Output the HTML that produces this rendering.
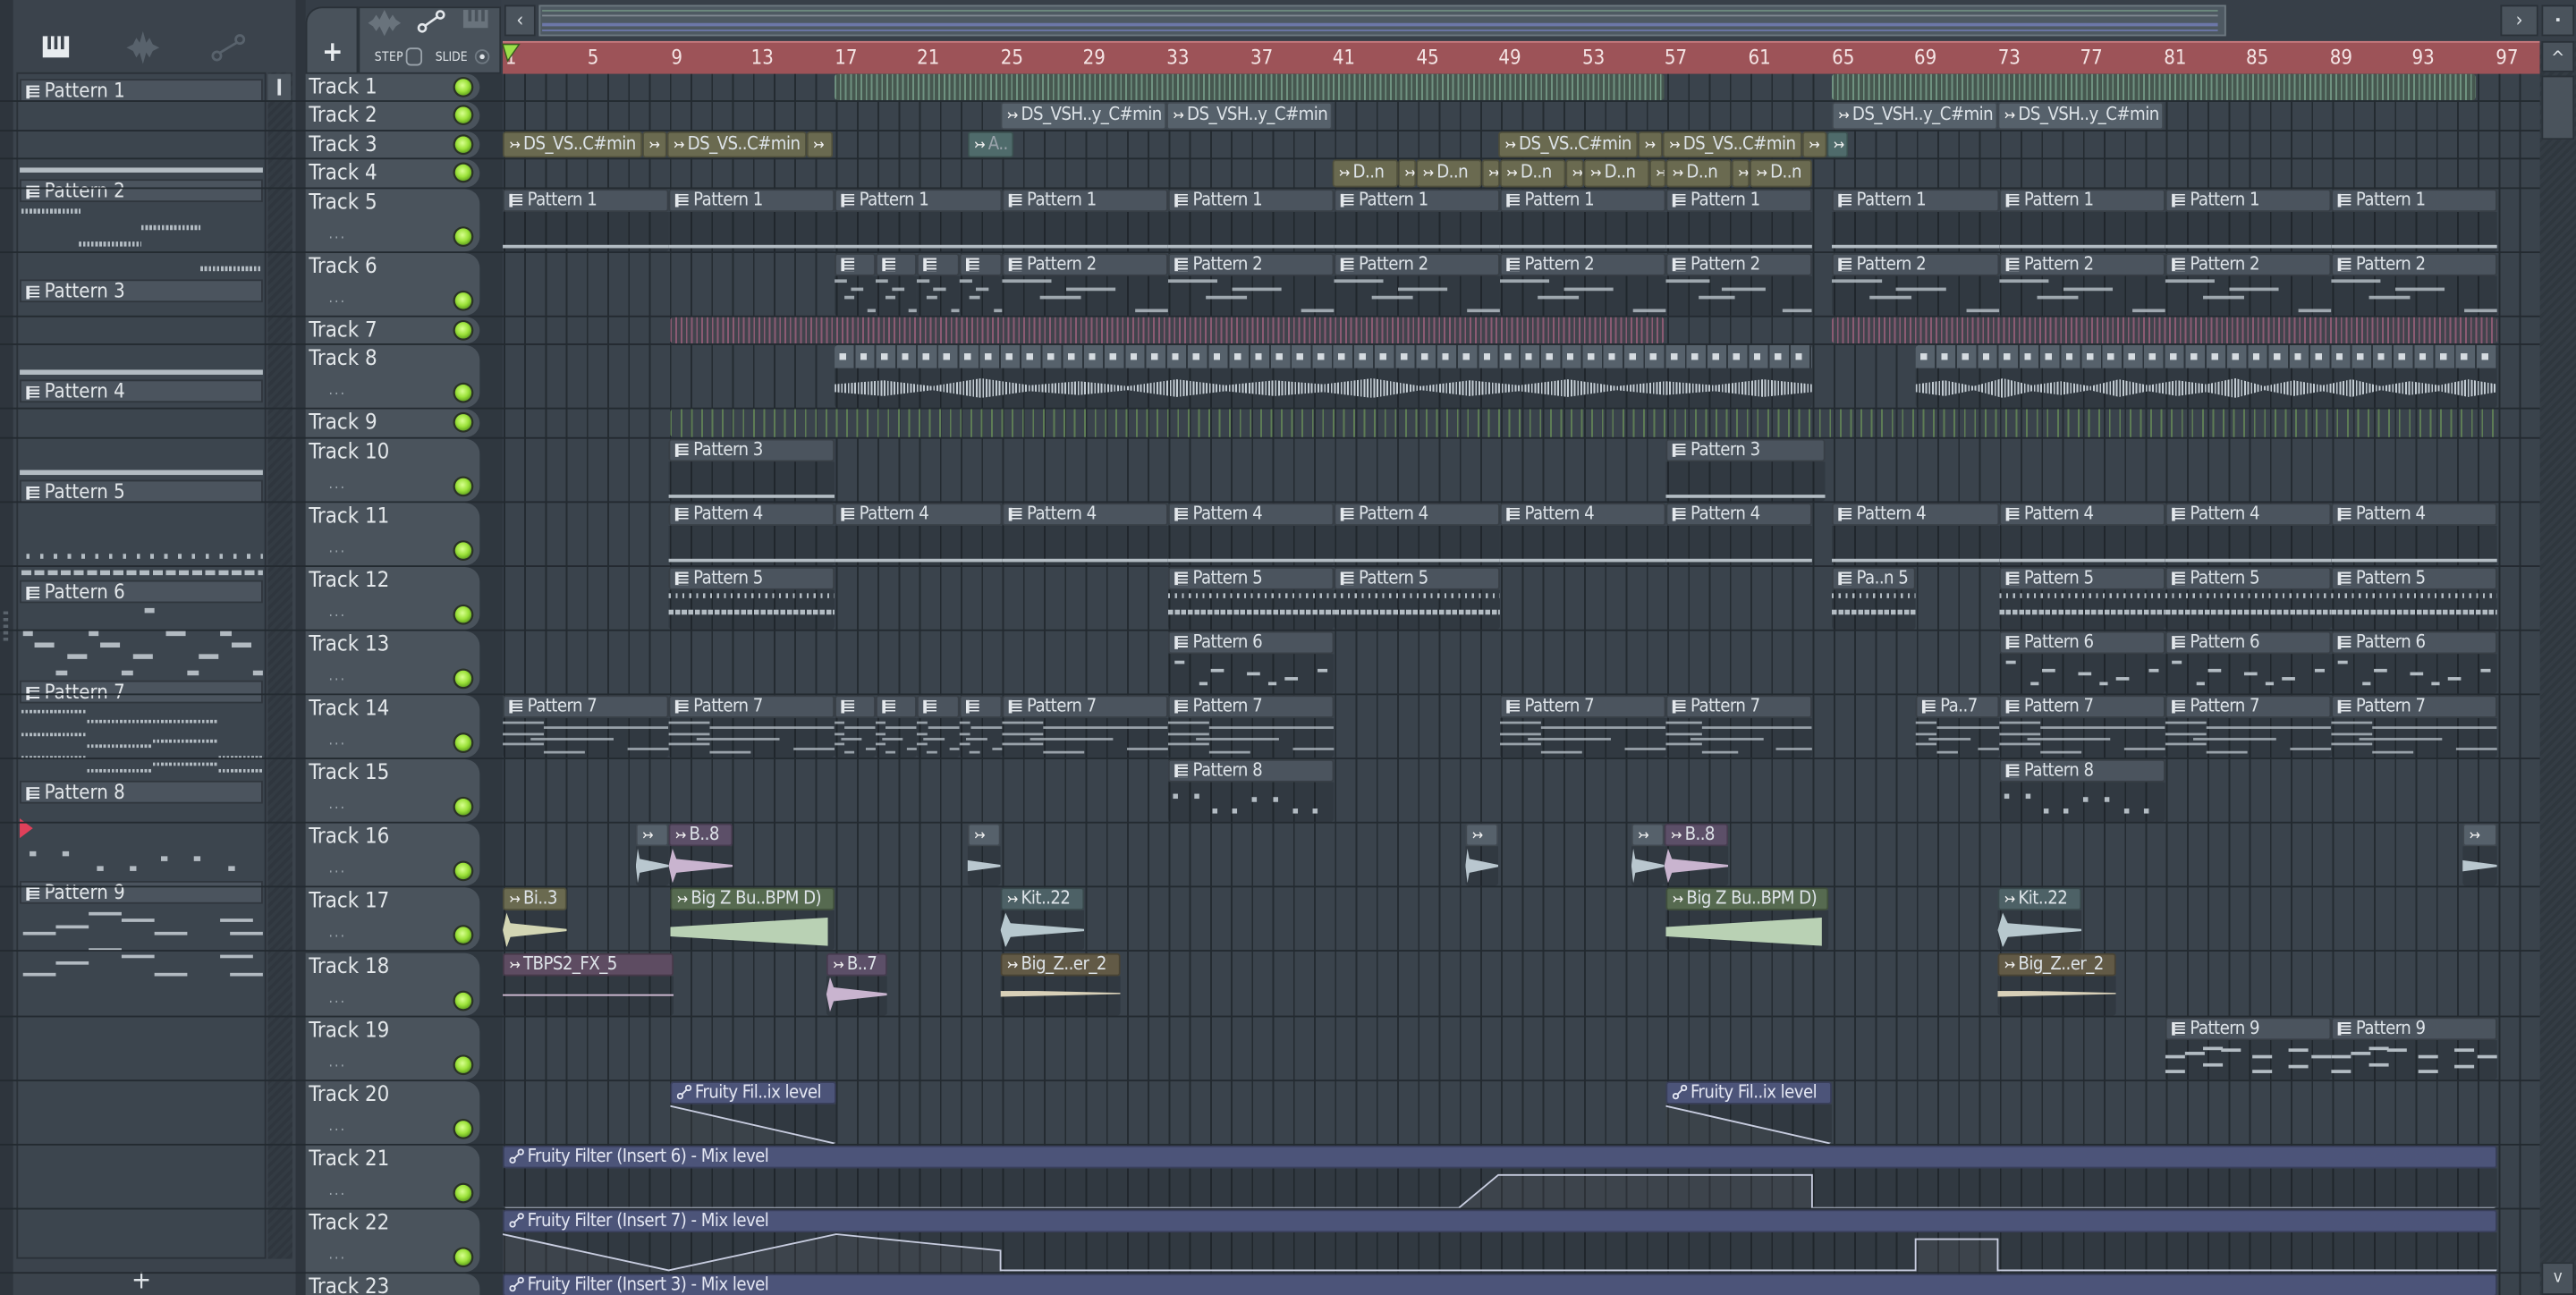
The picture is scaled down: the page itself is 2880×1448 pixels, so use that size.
<!DOCTYPE html>
<html><head><meta charset="utf-8">
<style>
html,body{margin:0;padding:0;width:2880px;height:1448px;overflow:hidden;background:#2f363e}
#s{position:absolute;left:0;top:0;width:1568px;height:788px;transform:scale(1.83673,1.83756);transform-origin:0 0;background:#353d46;font-family:"Liberation Sans Narrow","DejaVu Sans Condensed","Liberation Sans",sans-serif;color:#dde3e8;overflow:hidden}
.a{position:absolute}
.grid{position:absolute;left:306px;top:45px;width:1240px;height:743px;background-color:#3a434c;background-image:repeating-linear-gradient(90deg,transparent 0 0.5px,#242b31 0.5px 1.5px,transparent 1.5px 12.65px)}
.row{position:absolute;left:0;width:1546px;border-bottom:1px solid #232a30;box-sizing:border-box}
.th{position:absolute;left:186px;width:106px;top:0;bottom:0;background:#4a535c;border-radius:0 9px 9px 0;font-size:13px;line-height:17px;padding-left:2px;box-sizing:border-box;color:#e3e7ea}
.led{position:absolute;width:10px;height:10px;border-radius:50%;background:radial-gradient(circle at 45% 40%,#d8ff90 0,#9ce23a 45%,#5a9a1a 80%);box-shadow:0 0 0 1.2px #2a3226}
.dots{position:absolute;left:14px;bottom:1px;font-size:9px;color:#9aa3ab;letter-spacing:1px}
.c{position:absolute;top:0;height:100%;box-sizing:border-box;overflow:hidden;border-radius:2px}
.h{height:14px;background:#4b545e;font-size:11px;letter-spacing:-0.3px;line-height:12px;padding-left:3px;white-space:nowrap;border:1px solid rgba(0,0,0,.25);box-sizing:border-box;overflow:hidden;border-radius:2px}
.s .h{height:100%;line-height:14px}
.b{position:absolute;left:0;right:0;top:14px;bottom:0;background:rgba(18,22,27,.22)}
.pi{display:inline-block;width:6px;height:8px;margin-right:3px;vertical-align:-1px;background:repeating-linear-gradient(#e4e8ec 0 1px,#4b545e 1px 2px);border-left:2px solid #e4e8ec}
.ai{display:inline-block;margin-right:2px;font-size:9px;font-style:normal;color:#f2f2f2}
.ln{position:absolute;left:0;right:0;bottom:2px;height:2px;background:#b3bcc3}
.au .h{background:#56616b}
.ol .h{background:#6a6a50}
.te .h{background:#4f6b6b}
.pu .h{background:#5c4f68}
.gr .h{background:#566a50}
.br .h{background:#625a46}
.tl .h{background:#4d6166}
.am .h{background:#4c5479;color:#e3e6f2}
.hd{color:#9aa3ab}
.wv{position:absolute;left:0;right:0;top:6px;height:12px;background:repeating-linear-gradient(90deg,#c3ccd3 0 1px,transparent 1px 2px);clip-path:polygon(0 30%,5% 10%,10% 40%,15% 0,20% 35%,25% 15%,30% 40%,35% 5%,40% 35%,45% 10%,50% 30%,55% 0,60% 40%,65% 10%,70% 35%,75% 5%,80% 40%,85% 15%,90% 35%,95% 5%,100% 30%,100% 70%,95% 95%,90% 65%,85% 85%,80% 60%,75% 95%,70% 65%,65% 90%,60% 60%,55% 100%,50% 70%,45% 90%,40% 65%,35% 95%,30% 60%,25% 85%,20% 65%,15% 100%,10% 60%,5% 90%,0 70%)}
.tr{position:absolute;left:0;right:0;top:1px;bottom:2px;clip-path:polygon(0 50%,6% 0,12% 30%,100% 47%,100% 53%,12% 70%,6% 100%)}
.rn{position:absolute;top:28px;font-size:12px;color:#f4e4e4;width:24px;text-align:center;margin-left:-10px}
.pp{position:absolute;left:12px;width:148px;height:14px;background:#4b545e;border:1px solid #2f363d;box-sizing:border-box;font-size:12px;line-height:12px;padding-left:3px;color:#e3e7ea}
.nt{position:absolute;height:2.5px;background:#b2bac1}
svg{display:block}
.p2::before{content:"";position:absolute;left:0;right:0;top:2px;height:20px;background:
linear-gradient(#b3bcc3,#b3bcc3) 0 0/30% 2px no-repeat,
linear-gradient(#b3bcc3,#b3bcc3) 55% 30%/30% 2px no-repeat,
linear-gradient(#b3bcc3,#b3bcc3) 30% 60%/25% 2px no-repeat,
linear-gradient(#b3bcc3,#b3bcc3) 100% 100%/20% 2px no-repeat;opacity:.85}
.p5::before{content:"";position:absolute;left:0;right:0;top:2px;height:3px;background:repeating-linear-gradient(90deg,#b3bcc3 0 1.2px,transparent 1.2px 4.2px)}
.p5::after{content:"";position:absolute;left:0;right:0;top:12px;height:3px;background:repeating-linear-gradient(90deg,#b3bcc3 0 3px,transparent 3px 4px)}
.p6::before{content:"";position:absolute;left:0;right:0;top:3px;height:16px;background:
linear-gradient(#b3bcc3,#b3bcc3) 4% 10%/6% 2px no-repeat,linear-gradient(#b3bcc3,#b3bcc3) 28% 40%/8% 2px no-repeat,linear-gradient(#b3bcc3,#b3bcc3) 52% 60%/8% 2px no-repeat,linear-gradient(#b3bcc3,#b3bcc3) 76% 80%/8% 2px no-repeat,linear-gradient(#b3bcc3,#b3bcc3) 96% 40%/6% 2px no-repeat,linear-gradient(#b3bcc3,#b3bcc3) 20% 100%/5% 2px no-repeat,linear-gradient(#b3bcc3,#b3bcc3) 64% 100%/5% 2px no-repeat}
.p7::before{content:"";position:absolute;left:0;right:0;top:2px;height:20px;background:
linear-gradient(#b3bcc3,#b3bcc3) 0 0/25% 1.5px no-repeat,
linear-gradient(#b3bcc3,#b3bcc3) 100% 15%/75% 1.5px no-repeat,
linear-gradient(#b3bcc3,#b3bcc3) 0 35%/25% 1.5px no-repeat,
linear-gradient(#b3bcc3,#b3bcc3) 33% 55%/50% 1.5px no-repeat,
linear-gradient(#b3bcc3,#b3bcc3) 0 70%/25% 1.5px no-repeat,
linear-gradient(#b3bcc3,#b3bcc3) 100% 85%/25% 1.5px no-repeat,
linear-gradient(#b3bcc3,#b3bcc3) 33% 95%/25% 1.5px no-repeat;opacity:.8}
.p8::before{content:"";position:absolute;left:0;right:0;top:4px;height:16px;background:
linear-gradient(#b3bcc3,#b3bcc3) 3% 20%/3% 3px no-repeat,linear-gradient(#b3bcc3,#b3bcc3) 16% 20%/3% 3px no-repeat,linear-gradient(#b3bcc3,#b3bcc3) 52% 40%/3% 3px no-repeat,linear-gradient(#b3bcc3,#b3bcc3) 65% 40%/3% 3px no-repeat,linear-gradient(#b3bcc3,#b3bcc3) 28% 90%/3% 3px no-repeat,linear-gradient(#b3bcc3,#b3bcc3) 40% 90%/3% 3px no-repeat,linear-gradient(#b3bcc3,#b3bcc3) 78% 90%/3% 3px no-repeat,linear-gradient(#b3bcc3,#b3bcc3) 90% 90%/3% 3px no-repeat}
.p9::before{content:"";position:absolute;left:0;right:0;top:3px;height:18px;background:
linear-gradient(#b3bcc3,#b3bcc3) 0 40%/12% 2px no-repeat,linear-gradient(#b3bcc3,#b3bcc3) 13% 25%/12% 2px no-repeat,linear-gradient(#b3bcc3,#b3bcc3) 26% 10%/12% 2px no-repeat,linear-gradient(#b3bcc3,#b3bcc3) 38% 15%/12% 2px no-repeat,linear-gradient(#b3bcc3,#b3bcc3) 60% 40%/12% 2px no-repeat,linear-gradient(#b3bcc3,#b3bcc3) 84% 15%/12% 2px no-repeat,linear-gradient(#b3bcc3,#b3bcc3) 100% 40%/12% 2px no-repeat,linear-gradient(#b3bcc3,#b3bcc3) 0 95%/12% 2px no-repeat,linear-gradient(#b3bcc3,#b3bcc3) 26% 70%/12% 2px no-repeat,linear-gradient(#b3bcc3,#b3bcc3) 60% 95%/12% 2px no-repeat,linear-gradient(#b3bcc3,#b3bcc3) 84% 75%/12% 2px no-repeat}
.t8h{height:14px;background:repeating-linear-gradient(90deg,#56616b 0 11.6px,#2d353c 11.6px 12.65px)}
.t8a{position:absolute;left:0;right:0;top:5px;height:4px;background:repeating-linear-gradient(90deg,transparent 0 3px,#d6dce1 3px 7px,transparent 7px 12.65px)}
</style></head><body><div id="s">

<!-- left picker -->
<div class="a" style="left:0;top:0;width:8px;height:788px;background:#2e353d"></div>
<div class="a" style="left:8px;top:0;width:172px;height:788px;background:#3b434c"></div>
<div class="a" style="left:26px;top:22px;width:16px;height:13px;background:#e8ecef"></div>
<div class="a" style="left:29px;top:22px;width:2px;height:8px;background:#3b434c"></div><div class="a" style="left:33px;top:22px;width:2px;height:8px;background:#3b434c"></div><div class="a" style="left:37px;top:22px;width:2px;height:8px;background:#3b434c"></div>
<svg class="a" style="left:76px;top:18px" width="22" height="22"><path d="M1 11 L5 9 L7 5 L9 8 L11 1 L13 8 L15 5 L17 9 L21 11 L17 13 L15 17 L13 14 L11 21 L9 14 L7 17 L5 13Z" fill="#58626c"/></svg>
<svg class="a" style="left:128px;top:20px" width="22" height="18"><circle cx="4" cy="14" r="2.5" fill="none" stroke="#58626c" stroke-width="1.5"/><circle cx="18" cy="4" r="2.5" fill="none" stroke="#58626c" stroke-width="1.5"/><path d="M6 12 L16 6" stroke="#58626c" stroke-width="1.5"/></svg>
<div class="a" style="left:10px;top:44px;width:152px;height:722px;background:#3c454e;border:1px solid #2a3138;box-sizing:border-box"></div>
<div class="a" style="left:163px;top:44px;width:15px;height:722px;background:repeating-linear-gradient(135deg,#333b43 0 2px,#2f363e 2px 4px)"></div>
<div class="a" style="left:163px;top:45px;width:14px;height:16px;background:#4a535c"></div><div class="a" style="left:169px;top:48px;width:2px;height:10px;background:#dfe4e8"></div>
<div class="a" style="left:80px;top:769px;font-size:16px;color:#dfe4e8">+</div>
<div class="a" style="left:2px;top:372px;width:3px;height:20px;background:repeating-linear-gradient(#5a636c 0 2px,transparent 2px 4px)"></div>

<div class="pp" style="top:48px"><i class="pi"></i>Pattern 1</div>
<div class="a" style="left:12px;top:102px;width:148px;height:3px;background:#b3bcc3"></div>
<div class="pp" style="top:109px"><i class="pi"></i>Pattern 2</div>
<div class="a" style="left:13px;top:127px;width:36px;height:3px;background:repeating-linear-gradient(90deg,#b3bcc3 0 1.5px,transparent 1.5px 2.5px)"></div>
<div class="a" style="left:86px;top:137px;width:36px;height:3px;background:repeating-linear-gradient(90deg,#b3bcc3 0 1.5px,transparent 1.5px 2.5px)"></div>
<div class="a" style="left:48px;top:147px;width:38px;height:3px;background:repeating-linear-gradient(90deg,#b3bcc3 0 1.5px,transparent 1.5px 2.5px)"></div>
<div class="a" style="left:122px;top:162px;width:37px;height:3px;background:repeating-linear-gradient(90deg,#b3bcc3 0 1.5px,transparent 1.5px 2.5px)"></div>
<div class="pp" style="top:170px"><i class="pi"></i>Pattern 3</div>
<div class="a" style="left:12px;top:225px;width:148px;height:3px;background:#b3bcc3"></div>
<div class="pp" style="top:231px"><i class="pi"></i>Pattern 4</div>
<div class="a" style="left:12px;top:286px;width:148px;height:3px;background:#b3bcc3"></div>
<div class="pp" style="top:292px"><i class="pi"></i>Pattern 5</div>
<div class="a" style="left:16px;top:337px;width:144px;height:3px;background:repeating-linear-gradient(90deg,#b3bcc3 0 2px,transparent 2px 8.4px)"></div>
<div class="a" style="left:13px;top:347px;width:147px;height:3px;background:repeating-linear-gradient(90deg,#b3bcc3 0 6px,transparent 6px 8px)"></div>
<div class="pp" style="top:353px"><i class="pi"></i>Pattern 6</div>
<div class="nt" style="left:88px;top:370px;width:6px"></div>
<div class="nt" style="left:14px;top:384px;width:6px"></div><div class="nt" style="left:54px;top:384px;width:6px"></div><div class="nt" style="left:101px;top:384px;width:12px"></div><div class="nt" style="left:134px;top:384px;width:7px"></div>
<div class="nt" style="left:21px;top:391px;width:12px"></div><div class="nt" style="left:61px;top:391px;width:12px"></div><div class="nt" style="left:141px;top:391px;width:12px"></div>
<div class="nt" style="left:41px;top:398px;width:12px"></div><div class="nt" style="left:81px;top:398px;width:12px"></div><div class="nt" style="left:121px;top:398px;width:12px"></div>
<div class="nt" style="left:34px;top:408px;width:7px"></div><div class="nt" style="left:74px;top:408px;width:7px"></div><div class="nt" style="left:114px;top:408px;width:7px"></div><div class="nt" style="left:154px;top:408px;width:6px"></div>
<div class="pp" style="top:414px"><i class="pi"></i>Pattern 7</div>
<div class="a" style="left:13px;top:432px;width:40px;height:1.5px;background:repeating-linear-gradient(90deg,#b3bcc3 0 1.5px,transparent 1.5px 2.5px)"></div>
<div class="a" style="left:53px;top:438px;width:80px;height:1.5px;background:repeating-linear-gradient(90deg,#b3bcc3 0 1.5px,transparent 1.5px 2.5px)"></div>
<div class="a" style="left:13px;top:446px;width:40px;height:1.5px;background:repeating-linear-gradient(90deg,#b3bcc3 0 1.5px,transparent 1.5px 2.5px)"></div>
<div class="a" style="left:93px;top:450px;width:40px;height:1.5px;background:repeating-linear-gradient(90deg,#b3bcc3 0 1.5px,transparent 1.5px 2.5px)"></div>
<div class="a" style="left:53px;top:453px;width:40px;height:1.5px;background:repeating-linear-gradient(90deg,#b3bcc3 0 1.5px,transparent 1.5px 2.5px)"></div>
<div class="a" style="left:13px;top:460px;width:40px;height:1.5px;background:repeating-linear-gradient(90deg,#b3bcc3 0 1.5px,transparent 1.5px 2.5px)"></div>
<div class="a" style="left:133px;top:460px;width:27px;height:1.5px;background:repeating-linear-gradient(90deg,#b3bcc3 0 1.5px,transparent 1.5px 2.5px)"></div>
<div class="a" style="left:93px;top:464px;width:40px;height:1.5px;background:repeating-linear-gradient(90deg,#b3bcc3 0 1.5px,transparent 1.5px 2.5px)"></div>
<div class="a" style="left:53px;top:468px;width:40px;height:1.5px;background:repeating-linear-gradient(90deg,#b3bcc3 0 1.5px,transparent 1.5px 2.5px)"></div>
<div class="a" style="left:133px;top:468px;width:27px;height:1.5px;background:repeating-linear-gradient(90deg,#b3bcc3 0 1.5px,transparent 1.5px 2.5px)"></div>
<div class="pp" style="top:475px"><i class="pi"></i>Pattern 8</div>
<div class="a" style="left:12px;top:498px;width:0;height:0;border-left:8px solid #e0405a;border-top:6px solid transparent;border-bottom:6px solid transparent"></div>
<div class="nt" style="left:18px;top:518px;width:4px;height:3px"></div><div class="nt" style="left:38px;top:518px;width:4px;height:3px"></div><div class="nt" style="left:98px;top:521px;width:4px;height:3px"></div><div class="nt" style="left:118px;top:521px;width:4px;height:3px"></div>
<div class="nt" style="left:59px;top:527px;width:4px;height:3px"></div><div class="nt" style="left:79px;top:527px;width:4px;height:3px"></div><div class="nt" style="left:139px;top:527px;width:4px;height:3px"></div>
<div class="pp" style="top:536px"><i class="pi"></i>Pattern 9</div>
<div class="nt" style="left:54px;top:555px;width:20px;height:2px"></div><div class="nt" style="left:74px;top:559px;width:20px;height:2px"></div><div class="nt" style="left:134px;top:559px;width:20px;height:2px"></div><div class="nt" style="left:34px;top:563px;width:20px;height:2px"></div>
<div class="nt" style="left:14px;top:567px;width:20px;height:2px"></div><div class="nt" style="left:94px;top:567px;width:20px;height:2px"></div><div class="nt" style="left:140px;top:567px;width:20px;height:2px"></div>
<div class="nt" style="left:54px;top:577px;width:20px;height:2px"></div><div class="nt" style="left:74px;top:581px;width:20px;height:2px"></div><div class="nt" style="left:134px;top:581px;width:20px;height:2px"></div><div class="nt" style="left:34px;top:585px;width:20px;height:2px"></div>
<div class="nt" style="left:14px;top:592px;width:20px;height:2px"></div><div class="nt" style="left:94px;top:592px;width:20px;height:2px"></div><div class="nt" style="left:140px;top:592px;width:20px;height:2px"></div>

<!-- toolbar -->
<div class="a" style="left:180px;top:0;width:6px;height:788px;background:#2e353d"></div>
<div class="a" style="left:186px;top:4px;width:32px;height:41px;background:#49525b;border-radius:10px 0 0 0;border:1px solid #2a3138;box-sizing:border-box"></div>
<div class="a" style="left:196px;top:22px;font-size:17px;color:#e8ecef;font-weight:bold">+</div>
<div class="a" style="left:218px;top:4px;width:87px;height:41px;background:#49525b;border:1px solid #2a3138;box-sizing:border-box"></div>
<svg class="a" style="left:223px;top:6px" width="22" height="16"><path d="M1 8 L4 6 L6 3 L8 6 L11 0 L14 6 L16 3 L18 6 L21 8 L18 10 L16 13 L14 10 L11 16 L8 10 L6 13 L4 10Z" fill="#69737c"/></svg>
<svg class="a" style="left:253px;top:5px" width="20" height="16"><circle cx="4" cy="12" r="2.2" fill="none" stroke="#e4e8ec" stroke-width="1.4"/><circle cx="15" cy="4" r="2.2" fill="none" stroke="#e4e8ec" stroke-width="1.4"/><path d="M6 10.5 L13 5.5" stroke="#e4e8ec" stroke-width="1.4"/></svg>
<div class="a" style="left:282px;top:6px;width:15px;height:11px;background:#69737c"></div>
<div class="a" style="left:285px;top:6px;width:1.5px;height:7px;background:#49525b"></div><div class="a" style="left:289px;top:6px;width:1.5px;height:7px;background:#49525b"></div><div class="a" style="left:293px;top:6px;width:1.5px;height:7px;background:#49525b"></div>
<div class="a" style="left:228px;top:30px;font-size:7.5px;color:#dfe4e8;letter-spacing:.2px">STEP</div>
<div class="a" style="left:247px;top:29px;width:10px;height:11px;border:1.3px solid #9aa3ab;border-radius:3px;box-sizing:border-box"></div>
<div class="a" style="left:265px;top:30px;font-size:7.5px;color:#dfe4e8">SLIDE</div>
<div class="a" style="left:289px;top:30px;width:9px;height:9px;border:1.3px solid #707a83;border-radius:50%;box-sizing:border-box"></div><div class="a" style="left:292px;top:33px;width:3px;height:3px;border-radius:50%;background:#dfe4e8"></div>

<!-- top overview -->
<div class="a" style="left:305px;top:0;width:1263px;height:25px;background:#373f48"></div>
<div class="a" style="left:307px;top:3px;width:19px;height:19px;background:#4a535c;border:1px solid #2a3138;box-sizing:border-box;font-size:12px;line-height:17px;text-align:center;color:#dfe4e8">&lsaquo;</div>
<div class="a" style="left:328px;top:3px;width:1027px;height:19px;background:#4e5962;border:1px solid #6d7880;box-sizing:border-box"></div>
<div class="a" style="left:330px;top:6px;width:1020px;height:1px;background:#6d8a7f"></div>
<div class="a" style="left:330px;top:9px;width:1020px;height:1px;background:#7f8790"></div>
<div class="a" style="left:330px;top:14px;width:1020px;height:2px;background:#6c77a8"></div>
<div class="a" style="left:330px;top:18px;width:1020px;height:1px;background:#6c77a8"></div>
<div class="a" style="left:1522px;top:3px;width:23px;height:19px;background:#4a535c;border:1px solid #2a3138;box-sizing:border-box;font-size:12px;line-height:17px;text-align:center;color:#dfe4e8">&rsaquo;</div>
<div class="a" style="left:1547px;top:3px;width:20px;height:19px;background:#4a535c;border:1px solid #2a3138;box-sizing:border-box"></div><div class="a" style="left:1556px;top:11px;width:2px;height:2px;background:#dfe4e8"></div>

<!-- ruler -->
<div class="a" style="left:306px;top:25px;width:1240px;height:20px;background:#9d5358;border-top:1px solid #c77a7e;box-sizing:border-box"></div>
<div class="rn" style="left:309px">1</div><div class="rn" style="left:359px">5</div><div class="rn" style="left:410px">9</div><div class="rn" style="left:462px">13</div><div class="rn" style="left:513px">17</div><div class="rn" style="left:563px">21</div><div class="rn" style="left:614px">25</div><div class="rn" style="left:664px">29</div><div class="rn" style="left:715px">33</div><div class="rn" style="left:766px">37</div><div class="rn" style="left:816px">41</div><div class="rn" style="left:867px">45</div><div class="rn" style="left:917px">49</div><div class="rn" style="left:968px">53</div><div class="rn" style="left:1018px">57</div><div class="rn" style="left:1069px">61</div><div class="rn" style="left:1120px">65</div><div class="rn" style="left:1170px">69</div><div class="rn" style="left:1221px">73</div><div class="rn" style="left:1271px">77</div><div class="rn" style="left:1322px">81</div><div class="rn" style="left:1372px">85</div><div class="rn" style="left:1423px">89</div><div class="rn" style="left:1473px">93</div><div class="rn" style="left:1524px">97</div>
<svg class="a" style="left:305px;top:26px" width="12" height="12"><path d="M1 1 L11 1 L4 11 Z" fill="#9be04a" stroke="#3a5a20" stroke-width=".8"/></svg>

<!-- right scrollbar -->
<div class="a" style="left:1546px;top:25px;width:22px;height:763px;background:repeating-linear-gradient(135deg,#343c44 0 2px,#2f373e 2px 4px)"></div>
<div class="a" style="left:1547px;top:25px;width:20px;height:19px;background:#4a535c;border:1px solid #2a3138;box-sizing:border-box;font-size:11px;line-height:19px;text-align:center;color:#dfe4e8">^</div>
<div class="a" style="left:1547px;top:46px;width:20px;height:39px;background:#4a535c;border:1px solid #2a3138;box-sizing:border-box"></div>
<div class="a" style="left:1547px;top:768px;width:20px;height:20px;background:#4a535c;border:1px solid #2a3138;box-sizing:border-box;font-size:10px;line-height:18px;text-align:center;color:#dfe4e8">v</div>

<div class="a" style="left:186px;top:45px;width:120px;height:743px;background:#2f373f"></div>
<div class="grid"></div>

<!-- Tracks -->
<div class="row" style="top:45px;height:17.4px"><div class="th">Track 1<div class="led" style="left:91px;top:3px"></div></div>
 <div class="c" style="left:508px;width:505px;background:#46574f repeating-linear-gradient(90deg,#6f9280 0 1px,transparent 1px 3.16px)"></div>
 <div class="c" style="left:1115px;width:392px;background:#46574f repeating-linear-gradient(90deg,#6f9280 0 1px,transparent 1px 3.16px)"></div>
</div>
<div class="row" style="top:62.4px;height:17.4px"><div class="th">Track 2<div class="led" style="left:91px;top:3px"></div></div>
 <div class="c s au" style="left:609px;width:101px"><div class="h"><i class="ai">↣</i>DS_VSH..y_C#min</div></div>
 <div class="c s au" style="left:710px;width:101px"><div class="h"><i class="ai">↣</i>DS_VSH..y_C#min</div></div>
 <div class="c s au" style="left:1115px;width:101px"><div class="h"><i class="ai">↣</i>DS_VSH..y_C#min</div></div>
 <div class="c s au" style="left:1216px;width:101px"><div class="h"><i class="ai">↣</i>DS_VSH..y_C#min</div></div>
</div>
<div class="row" style="top:79.8px;height:17.4px"><div class="th">Track 3<div class="led" style="left:91px;top:3px"></div></div>
 <div class="c s ol" style="left:306px;width:85px"><div class="h"><i class="ai">↣</i>DS_VS..C#min</div></div>
 <div class="c s ol" style="left:391px;width:15px"><div class="h"><i class="ai">↣</i></div></div>
 <div class="c s ol" style="left:406px;width:85px"><div class="h"><i class="ai">↣</i>DS_VS..C#min</div></div>
 <div class="c s ol" style="left:491px;width:16px"><div class="h"><i class="ai">↣</i></div></div>
 <div class="c s te" style="left:589px;width:28px"><div class="h"><i class="ai">↣</i><span class="hd">A..</span></div></div>
 <div class="c s ol" style="left:912px;width:85px"><div class="h"><i class="ai">↣</i>DS_VS..C#min</div></div>
 <div class="c s ol" style="left:997px;width:15px"><div class="h"><i class="ai">↣</i></div></div>
 <div class="c s ol" style="left:1012px;width:85px"><div class="h"><i class="ai">↣</i>DS_VS..C#min</div></div>
 <div class="c s ol" style="left:1097px;width:15px"><div class="h"><i class="ai">↣</i></div></div>
 <div class="c s te" style="left:1112px;width:13px"><div class="h"><i class="ai">↣</i></div></div>
</div>
<div class="row" style="top:97.2px;height:17.4px"><div class="th">Track 4<div class="led" style="left:91px;top:3px"></div></div>
 <div class="c s ol" style="left:811px;width:40px"><div class="h"><i class="ai">↣</i>D..n</div></div><div class="c s ol" style="left:851px;width:11px"><div class="h"><i class="ai">↣</i></div></div>
 <div class="c s ol" style="left:862px;width:40px"><div class="h"><i class="ai">↣</i>D..n</div></div><div class="c s ol" style="left:902px;width:11px"><div class="h"><i class="ai">↣</i></div></div>
 <div class="c s ol" style="left:913px;width:40px"><div class="h"><i class="ai">↣</i>D..n</div></div><div class="c s ol" style="left:953px;width:11px"><div class="h"><i class="ai">↣</i></div></div>
 <div class="c s ol" style="left:964px;width:40px"><div class="h"><i class="ai">↣</i>D..n</div></div><div class="c s ol" style="left:1004px;width:10px"><div class="h"><i class="ai">↣</i></div></div>
 <div class="c s ol" style="left:1014px;width:40px"><div class="h"><i class="ai">↣</i>D..n</div></div><div class="c s ol" style="left:1054px;width:11px"><div class="h"><i class="ai">↣</i></div></div>
 <div class="c s ol" style="left:1065px;width:38px"><div class="h"><i class="ai">↣</i>D..n</div></div>
</div>

<div class="row" style="top:114.6px;height:39.1px"><div class="th">Track 5<div class="led" style="left:91px;top:24px"></div><div class="dots">...</div></div>
 <div class="c" style="left:306px;width:101px"><div class="h"><i class="pi"></i>Pattern 1</div><div class="b"><div class="ln"></div></div></div>
 <div class="c" style="left:407px;width:101px"><div class="h"><i class="pi"></i>Pattern 1</div><div class="b"><div class="ln"></div></div></div>
 <div class="c" style="left:508px;width:102px"><div class="h"><i class="pi"></i>Pattern 1</div><div class="b"><div class="ln"></div></div></div>
 <div class="c" style="left:610px;width:101px"><div class="h"><i class="pi"></i>Pattern 1</div><div class="b"><div class="ln"></div></div></div>
 <div class="c" style="left:711px;width:101px"><div class="h"><i class="pi"></i>Pattern 1</div><div class="b"><div class="ln"></div></div></div>
 <div class="c" style="left:812px;width:101px"><div class="h"><i class="pi"></i>Pattern 1</div><div class="b"><div class="ln"></div></div></div>
 <div class="c" style="left:913px;width:101px"><div class="h"><i class="pi"></i>Pattern 1</div><div class="b"><div class="ln"></div></div></div>
 <div class="c" style="left:1014px;width:89px"><div class="h"><i class="pi"></i>Pattern 1</div><div class="b"><div class="ln"></div></div></div>
 <div class="c" style="left:1115px;width:102px"><div class="h"><i class="pi"></i>Pattern 1</div><div class="b"><div class="ln"></div></div></div>
 <div class="c" style="left:1217px;width:101px"><div class="h"><i class="pi"></i>Pattern 1</div><div class="b"><div class="ln"></div></div></div>
 <div class="c" style="left:1318px;width:101px"><div class="h"><i class="pi"></i>Pattern 1</div><div class="b"><div class="ln"></div></div></div>
 <div class="c" style="left:1419px;width:101px"><div class="h"><i class="pi"></i>Pattern 1</div><div class="b"><div class="ln"></div></div></div>
</div>

<div class="row" style="top:153.7px;height:39.1px"><div class="th">Track 6<div class="led" style="left:91px;top:24px"></div><div class="dots">...</div></div>
 <div class="c" style="left:508px;width:25px"><div class="h"><i class="pi"></i></div><div class="b p2"></div></div>
 <div class="c" style="left:533px;width:25px"><div class="h"><i class="pi"></i></div><div class="b p2"></div></div>
 <div class="c" style="left:558px;width:26px"><div class="h"><i class="pi"></i></div><div class="b p2"></div></div>
 <div class="c" style="left:584px;width:26px"><div class="h"><i class="pi"></i></div><div class="b p2"></div></div>
 <div class="c" style="left:610px;width:101px"><div class="h"><i class="pi"></i>Pattern 2</div><div class="b p2"></div></div>
 <div class="c" style="left:711px;width:101px"><div class="h"><i class="pi"></i>Pattern 2</div><div class="b p2"></div></div>
 <div class="c" style="left:812px;width:101px"><div class="h"><i class="pi"></i>Pattern 2</div><div class="b p2"></div></div>
 <div class="c" style="left:913px;width:101px"><div class="h"><i class="pi"></i>Pattern 2</div><div class="b p2"></div></div>
 <div class="c" style="left:1014px;width:89px"><div class="h"><i class="pi"></i>Pattern 2</div><div class="b p2"></div></div>
 <div class="c" style="left:1115px;width:102px"><div class="h"><i class="pi"></i>Pattern 2</div><div class="b p2"></div></div>
 <div class="c" style="left:1217px;width:101px"><div class="h"><i class="pi"></i>Pattern 2</div><div class="b p2"></div></div>
 <div class="c" style="left:1318px;width:101px"><div class="h"><i class="pi"></i>Pattern 2</div><div class="b p2"></div></div>
 <div class="c" style="left:1419px;width:101px"><div class="h"><i class="pi"></i>Pattern 2</div><div class="b p2"></div></div>
</div>

<div class="row" style="top:192.8px;height:17.4px"><div class="th">Track 7<div class="led" style="left:91px;top:3px"></div></div>
 <div class="c" style="left:408px;width:605px;background:#41434c repeating-linear-gradient(90deg,#8b5b73 0 1px,transparent 1px 3.16px)"></div>
 <div class="c" style="left:1115px;width:405px;background:#41434c repeating-linear-gradient(90deg,#8b5b73 0 1px,transparent 1px 3.16px)"></div>
</div>

<div class="row" style="top:210.2px;height:39.1px"><div class="th">Track 8<div class="led" style="left:91px;top:24px"></div><div class="dots">...</div></div>
 <div class="c" style="left:508px;width:595px"><div class="t8h"></div><div class="t8a"></div><div class="b"><div class="wv"></div></div></div>
 <div class="c" style="left:1166px;width:354px"><div class="t8h"></div><div class="t8a"></div><div class="b"><div class="wv"></div></div></div>
</div>

<div class="row" style="top:249.3px;height:17.4px"><div class="th">Track 9<div class="led" style="left:91px;top:3px"></div></div>
 <div class="c" style="left:408px;width:1112px;background:repeating-linear-gradient(90deg,#5d7c55 0 1px,transparent 1px 6.3px)"></div>
</div>

<div class="row" style="top:266.7px;height:39.1px"><div class="th">Track 10<div class="led" style="left:91px;top:24px"></div><div class="dots">...</div></div>
 <div class="c" style="left:407px;width:101px"><div class="h"><i class="pi"></i>Pattern 3</div><div class="b"><div class="ln"></div></div></div>
 <div class="c" style="left:1014px;width:97px"><div class="h"><i class="pi"></i>Pattern 3</div><div class="b"><div class="ln"></div></div></div>
</div>

<div class="row" style="top:305.8px;height:39.1px"><div class="th">Track 11<div class="led" style="left:91px;top:24px"></div><div class="dots">...</div></div>
 <div class="c" style="left:407px;width:101px"><div class="h"><i class="pi"></i>Pattern 4</div><div class="b"><div class="ln"></div></div></div>
 <div class="c" style="left:508px;width:102px"><div class="h"><i class="pi"></i>Pattern 4</div><div class="b"><div class="ln"></div></div></div>
 <div class="c" style="left:610px;width:101px"><div class="h"><i class="pi"></i>Pattern 4</div><div class="b"><div class="ln"></div></div></div>
 <div class="c" style="left:711px;width:101px"><div class="h"><i class="pi"></i>Pattern 4</div><div class="b"><div class="ln"></div></div></div>
 <div class="c" style="left:812px;width:101px"><div class="h"><i class="pi"></i>Pattern 4</div><div class="b"><div class="ln"></div></div></div>
 <div class="c" style="left:913px;width:101px"><div class="h"><i class="pi"></i>Pattern 4</div><div class="b"><div class="ln"></div></div></div>
 <div class="c" style="left:1014px;width:89px"><div class="h"><i class="pi"></i>Pattern 4</div><div class="b"><div class="ln"></div></div></div>
 <div class="c" style="left:1115px;width:102px"><div class="h"><i class="pi"></i>Pattern 4</div><div class="b"><div class="ln"></div></div></div>
 <div class="c" style="left:1217px;width:101px"><div class="h"><i class="pi"></i>Pattern 4</div><div class="b"><div class="ln"></div></div></div>
 <div class="c" style="left:1318px;width:101px"><div class="h"><i class="pi"></i>Pattern 4</div><div class="b"><div class="ln"></div></div></div>
 <div class="c" style="left:1419px;width:101px"><div class="h"><i class="pi"></i>Pattern 4</div><div class="b"><div class="ln"></div></div></div>
</div>

<div class="row" style="top:344.9px;height:39.1px"><div class="th">Track 12<div class="led" style="left:91px;top:24px"></div><div class="dots">...</div></div>
 <div class="c" style="left:407px;width:101px"><div class="h"><i class="pi"></i>Pattern 5</div><div class="b p5"></div></div>
 <div class="c" style="left:711px;width:101px"><div class="h"><i class="pi"></i>Pattern 5</div><div class="b p5"></div></div>
 <div class="c" style="left:812px;width:101px"><div class="h"><i class="pi"></i>Pattern 5</div><div class="b p5"></div></div>
 <div class="c" style="left:1115px;width:51px"><div class="h"><i class="pi"></i>Pa..n 5</div><div class="b p5"></div></div>
 <div class="c" style="left:1217px;width:101px"><div class="h"><i class="pi"></i>Pattern 5</div><div class="b p5"></div></div>
 <div class="c" style="left:1318px;width:101px"><div class="h"><i class="pi"></i>Pattern 5</div><div class="b p5"></div></div>
 <div class="c" style="left:1419px;width:101px"><div class="h"><i class="pi"></i>Pattern 5</div><div class="b p5"></div></div>
</div>

<div class="row" style="top:384px;height:39.1px"><div class="th">Track 13<div class="led" style="left:91px;top:24px"></div><div class="dots">...</div></div>
 <div class="c" style="left:711px;width:101px"><div class="h"><i class="pi"></i>Pattern 6</div><div class="b p6"></div></div>
 <div class="c" style="left:1217px;width:101px"><div class="h"><i class="pi"></i>Pattern 6</div><div class="b p6"></div></div>
 <div class="c" style="left:1318px;width:101px"><div class="h"><i class="pi"></i>Pattern 6</div><div class="b p6"></div></div>
 <div class="c" style="left:1419px;width:101px"><div class="h"><i class="pi"></i>Pattern 6</div><div class="b p6"></div></div>
</div>

<div class="row" style="top:423.1px;height:39.1px"><div class="th">Track 14<div class="led" style="left:91px;top:24px"></div><div class="dots">...</div></div>
 <div class="c" style="left:306px;width:101px"><div class="h"><i class="pi"></i>Pattern 7</div><div class="b p7"></div></div>
 <div class="c" style="left:407px;width:101px"><div class="h"><i class="pi"></i>Pattern 7</div><div class="b p7"></div></div>
 <div class="c" style="left:508px;width:25px"><div class="h"><i class="pi"></i></div><div class="b p7"></div></div>
 <div class="c" style="left:533px;width:25px"><div class="h"><i class="pi"></i></div><div class="b p7"></div></div>
 <div class="c" style="left:558px;width:26px"><div class="h"><i class="pi"></i></div><div class="b p7"></div></div>
 <div class="c" style="left:584px;width:26px"><div class="h"><i class="pi"></i></div><div class="b p7"></div></div>
 <div class="c" style="left:610px;width:101px"><div class="h"><i class="pi"></i>Pattern 7</div><div class="b p7"></div></div>
 <div class="c" style="left:711px;width:101px"><div class="h"><i class="pi"></i>Pattern 7</div><div class="b p7"></div></div>
 <div class="c" style="left:913px;width:101px"><div class="h"><i class="pi"></i>Pattern 7</div><div class="b p7"></div></div>
 <div class="c" style="left:1014px;width:89px"><div class="h"><i class="pi"></i>Pattern 7</div><div class="b p7"></div></div>
 <div class="c" style="left:1166px;width:51px"><div class="h"><i class="pi"></i>Pa..7</div><div class="b p7"></div></div>
 <div class="c" style="left:1217px;width:101px"><div class="h"><i class="pi"></i>Pattern 7</div><div class="b p7"></div></div>
 <div class="c" style="left:1318px;width:101px"><div class="h"><i class="pi"></i>Pattern 7</div><div class="b p7"></div></div>
 <div class="c" style="left:1419px;width:101px"><div class="h"><i class="pi"></i>Pattern 7</div><div class="b p7"></div></div>
</div>

<div class="row" style="top:462.2px;height:39.1px"><div class="th">Track 15<div class="led" style="left:91px;top:24px"></div><div class="dots">...</div></div>
 <div class="c" style="left:711px;width:101px"><div class="h"><i class="pi"></i>Pattern 8</div><div class="b p8"></div></div>
 <div class="c" style="left:1217px;width:101px"><div class="h"><i class="pi"></i>Pattern 8</div><div class="b p8"></div></div>
</div>

<div class="row" style="top:501.3px;height:39.1px"><div class="th">Track 16<div class="led" style="left:91px;top:24px"></div><div class="dots">...</div></div>
 <div class="c au" style="left:387px;width:20px"><div class="h"><i class="ai">↣</i></div><div class="b"><div class="tr" style="background:#b9c7cf"></div></div></div>
 <div class="c pu" style="left:407px;width:39px"><div class="h"><i class="ai">↣</i>B..8</div><div class="b"><div class="tr" style="background:#c9b4cf"></div></div></div>
 <div class="c au" style="left:589px;width:20px"><div class="h"><i class="ai">↣</i></div><div class="b"><div class="tr" style="background:#b9c7cf;left:-10px"></div></div></div>
 <div class="c au" style="left:892px;width:20px"><div class="h"><i class="ai">↣</i></div><div class="b"><div class="tr" style="background:#b9c7cf"></div></div></div>
 <div class="c au" style="left:993px;width:20px"><div class="h"><i class="ai">↣</i></div><div class="b"><div class="tr" style="background:#b9c7cf"></div></div></div>
 <div class="c pu" style="left:1013px;width:39px"><div class="h"><i class="ai">↣</i>B..8</div><div class="b"><div class="tr" style="background:#c9b4cf"></div></div></div>
 <div class="c au" style="left:1499px;width:21px"><div class="h"><i class="ai">↣</i></div><div class="b"><div class="tr" style="background:#b9c7cf;left:-10px"></div></div></div>
</div>

<div class="row" style="top:540.4px;height:39.1px"><div class="th">Track 17<div class="led" style="left:91px;top:24px"></div><div class="dots">...</div></div>
 <div class="c ol" style="left:306px;width:39px"><div class="h"><i class="ai">↣</i>Bi..3</div><div class="b"><div class="tr" style="background:#d3d6b4"></div></div></div>
 <div class="c gr" style="left:408px;width:100px"><div class="h"><i class="ai">↣</i>Big Z Bu..BPM D)</div><div class="b"><div class="a" style="left:0;right:4px;top:3px;bottom:2px;background:#b9d1b4;clip-path:polygon(0 35%,100% 5%,100% 95%,0 65%)"></div></div></div>
 <div class="c tl" style="left:609px;width:51px"><div class="h"><i class="ai">↣</i>Kit..22</div><div class="b"><div class="tr" style="background:#b7c8ce"></div></div></div>
 <div class="c gr" style="left:1014px;width:99px"><div class="h"><i class="ai">↣</i>Big Z Bu..BPM D)</div><div class="b"><div class="a" style="left:0;right:4px;top:3px;bottom:2px;background:#b9d1b4;clip-path:polygon(0 35%,100% 5%,100% 95%,0 65%)"></div></div></div>
 <div class="c tl" style="left:1216px;width:51px"><div class="h"><i class="ai">↣</i>Kit..22</div><div class="b"><div class="tr" style="background:#b7c8ce"></div></div></div>
</div>

<div class="row" style="top:579.5px;height:39.1px"><div class="th">Track 18<div class="led" style="left:91px;top:24px"></div><div class="dots">...</div></div>
 <div class="c pu" style="left:306px;width:104px"><div class="h" style="background:#5e4c62"><i class="ai">↣</i>TBPS2_FX_5</div><div class="b"><div class="a" style="left:0;right:0;top:11px;height:1.5px;background:#d5bfd8"></div></div></div>
 <div class="c pu" style="left:503px;width:37px"><div class="h"><i class="ai">↣</i>B..7</div><div class="b"><div class="tr" style="background:#c9b4cf"></div></div></div>
 <div class="c br" style="left:609px;width:73px"><div class="h"><i class="ai">↣</i>Big_Z..er_2</div><div class="b"><div class="a" style="left:0;right:0;top:9px;height:4px;background:#d8d0b8;clip-path:polygon(0 0,100% 40%,100% 60%,0 100%)"></div></div></div>
 <div class="c br" style="left:1216px;width:72px"><div class="h"><i class="ai">↣</i>Big_Z..er_2</div><div class="b"><div class="a" style="left:0;right:0;top:9px;height:4px;background:#d8d0b8;clip-path:polygon(0 0,100% 40%,100% 60%,0 100%)"></div></div></div>
</div>

<div class="row" style="top:618.6px;height:39.1px"><div class="th">Track 19<div class="led" style="left:91px;top:24px"></div><div class="dots">...</div></div>
 <div class="c" style="left:1318px;width:101px"><div class="h"><i class="pi"></i>Pattern 9</div><div class="b p9"></div></div>
 <div class="c" style="left:1419px;width:101px"><div class="h"><i class="pi"></i>Pattern 9</div><div class="b p9"></div></div>
</div>

<div class="row" style="top:657.7px;height:39.1px"><div class="th">Track 20<div class="led" style="left:91px;top:24px"></div><div class="dots">...</div></div>
 <div class="c am" style="left:408px;width:101px"><div class="h"><svg style="display:inline-block;vertical-align:-1px;margin-right:2px" width="9" height="9"><circle cx="2" cy="7" r="1.5" fill="none" stroke="#e3e6f2"/><circle cx="7" cy="2" r="1.5" fill="none" stroke="#e3e6f2"/><path d="M3 6 L6 3" stroke="#e3e6f2"/></svg>Fruity Fil..ix level</div><div class="b"><svg width="101" height="25"><path d="M0 1 L101 24 L0 24Z" fill="rgba(255,255,255,.05)"/><path d="M0 1 L101 24" stroke="#c8cde0" stroke-width="1"/></svg></div></div>
 <div class="c am" style="left:1014px;width:101px"><div class="h"><svg style="display:inline-block;vertical-align:-1px;margin-right:2px" width="9" height="9"><circle cx="2" cy="7" r="1.5" fill="none" stroke="#e3e6f2"/><circle cx="7" cy="2" r="1.5" fill="none" stroke="#e3e6f2"/><path d="M3 6 L6 3" stroke="#e3e6f2"/></svg>Fruity Fil..ix level</div><div class="b"><svg width="101" height="25"><path d="M0 1 L101 24 L0 24Z" fill="rgba(255,255,255,.05)"/><path d="M0 1 L101 24" stroke="#c8cde0" stroke-width="1"/></svg></div></div>
</div>

<div class="row" style="top:696.8px;height:39.1px"><div class="th">Track 21<div class="led" style="left:91px;top:24px"></div><div class="dots">...</div></div>
 <div class="c am" style="left:306px;width:1214px"><div class="h"><svg style="display:inline-block;vertical-align:-1px;margin-right:2px" width="9" height="9"><circle cx="2" cy="7" r="1.5" fill="none" stroke="#e3e6f2"/><circle cx="7" cy="2" r="1.5" fill="none" stroke="#e3e6f2"/><path d="M3 6 L6 3" stroke="#e3e6f2"/></svg>Fruity Filter (Insert 6) - Mix level</div><div class="b"><svg width="1214" height="25"><path d="M582 24 L606 4 L797 4 L797 24Z" fill="rgba(255,255,255,.06)"/><path d="M0 24 L582 24 L606 4 L797 4 L797 24 L1214 24" fill="none" stroke="#c8cde0" stroke-width="1"/></svg></div></div>
</div>

<div class="row" style="top:735.9px;height:39.1px"><div class="th">Track 22<div class="led" style="left:91px;top:24px"></div><div class="dots">...</div></div>
 <div class="c am" style="left:306px;width:1214px"><div class="h"><svg style="display:inline-block;vertical-align:-1px;margin-right:2px" width="9" height="9"><circle cx="2" cy="7" r="1.5" fill="none" stroke="#e3e6f2"/><circle cx="7" cy="2" r="1.5" fill="none" stroke="#e3e6f2"/><path d="M3 6 L6 3" stroke="#e3e6f2"/></svg>Fruity Filter (Insert 7) - Mix level</div><div class="b"><svg width="1214" height="25"><path d="M0 1 L101 23 L203 1 L303 11 L303 24 L0 24Z M860 4 L910 4 L910 24 L860 24Z" fill="rgba(255,255,255,.06)"/><path d="M0 1 L101 23 L203 1 L303 11 L303 23 L860 23 L860 4 L910 4 L910 23 L1214 23" fill="none" stroke="#c8cde0" stroke-width="1"/></svg></div></div>
</div>

<div class="row" style="top:775px;height:39.1px"><div class="th">Track 23</div>
 <div class="c am" style="left:306px;width:1214px"><div class="h"><svg style="display:inline-block;vertical-align:-1px;margin-right:2px" width="9" height="9"><circle cx="2" cy="7" r="1.5" fill="none" stroke="#e3e6f2"/><circle cx="7" cy="2" r="1.5" fill="none" stroke="#e3e6f2"/><path d="M3 6 L6 3" stroke="#e3e6f2"/></svg>Fruity Filter (Insert 3) - Mix level</div></div>
</div>

</div></body></html>
